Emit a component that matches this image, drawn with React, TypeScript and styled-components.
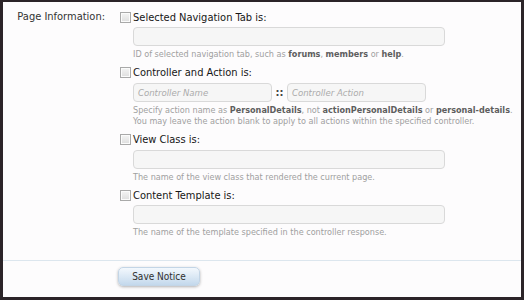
import React from 'react';
import styled, { createGlobalStyle } from 'styled-components';

const GlobalStyle = createGlobalStyle`
  html, body {
    margin: 0;
    padding: 0;
  }
  body {
    background: #2b2428;
    font-family: "DejaVu Sans Condensed", "DejaVu Sans", Tahoma, sans-serif;
  }
`;

const Panel = styled.div`
  margin: 2px 3px 3px 3px;
  height: 295px;
  background: #fdfcfd;
  display: flex;
  flex-direction: column;
`;

const FormRow = styled.dl`
  display: grid;
  grid-template-columns: 102px 1fr;
  column-gap: 15px;
  margin: 0;
  padding-top: 8px;
`;

const RowLabel = styled.dt`
  text-align: right;
  font-size: 11px;
  line-height: 14px;
  color: #333;
`;

const Options = styled.dd`
  margin: 0;
`;

const Option = styled.div`
  margin-bottom: 5px;
`;

const CheckLine = styled.label`
  display: flex;
  align-items: center;
  gap: 2px;
  height: 14px;
  font-size: 11px;
  color: #161616;
`;

const Box = styled.span`
  width: 11px;
  height: 11px;
  box-sizing: border-box;
  border: 1px solid #a9a9a9;
  background: linear-gradient(#f4f4f4, #dedede);
  box-shadow: inset 0 0 0 1px #fbfbfb;
`;

const Sub = styled.div`
  margin-left: 13px;
`;

const Inputs = styled.div`
  display: flex;
  align-items: center;
  margin-top: 3px;
`;

const TextBox = styled.div<{ $width: number }>`
  width: ${(p) => p.$width}px;
  height: 19px;
  box-sizing: border-box;
  border: 1px solid #d9d9d9;
  border-radius: 4px;
  background: #f6f6f6;
  padding-left: 4px;
  font-size: 9.5px;
  font-style: italic;
  line-height: 17px;
  color: #ababab;
`;

const Sep = styled.span`
  width: 15px;
  text-align: center;
  font-size: 11px;
  font-weight: bold;
  color: #444;
`;

const Hint = styled.p`
  margin: 3px 0 0;
  font-size: 9px;
  line-height: 11.5px;
  color: #a0a0a0;

  b {
    color: #5e5e5e;
  }
`;

const Footer = styled.div`
  margin-top: 16px;
  border-top: 1px solid #dce6ee;
  padding: 4px 0 0 115px;
`;

const Button = styled.button`
  width: 82px;
  height: 19px;
  box-sizing: border-box;
  border: 1px solid #c3d5e6;
  border-radius: 5px;
  background: linear-gradient(#f3f8fd, #d9e7f4 55%, #c3d8ec);
  box-shadow: 0 1px 3px rgba(0, 0, 0, 0.3);
  font-family: inherit;
  font-size: 10px;
  color: #2f2f2f;
  padding: 0;
`;

const Check: React.FC<{ children: React.ReactNode }> = ({ children }) => (
  <CheckLine>
    <Box />
    {children}
  </CheckLine>
);

const App: React.FC = () => (
  <>
    <GlobalStyle />
    <Panel>
      <FormRow>
        <RowLabel>Page Information:</RowLabel>
        <Options>
          <Option>
            <Check>Selected Navigation Tab is:</Check>
            <Sub>
              <Inputs>
                <TextBox $width={312} />
              </Inputs>
              <Hint>
                ID of selected navigation tab, such as <b>forums</b>, <b>members</b> or <b>help</b>.
              </Hint>
            </Sub>
          </Option>
          <Option>
            <Check>Controller and Action is:</Check>
            <Sub>
              <Inputs>
                <TextBox $width={139}>Controller Name</TextBox>
                <Sep>::</Sep>
                <TextBox $width={139}>Controller Action</TextBox>
              </Inputs>
              <Hint>
                Specify action name as <b>PersonalDetails</b>, not <b>actionPersonalDetails</b> or{' '}
                <b>personal-details</b>.<br />
                You may leave the action blank to apply to all actions within the specified controller.
              </Hint>
            </Sub>
          </Option>
          <Option>
            <Check>View Class is:</Check>
            <Sub>
              <Inputs>
                <TextBox $width={312} />
              </Inputs>
              <Hint>The name of the view class that rendered the current page.</Hint>
            </Sub>
          </Option>
          <Option>
            <Check>Content Template is:</Check>
            <Sub>
              <Inputs>
                <TextBox $width={312} />
              </Inputs>
              <Hint>The name of the template specified in the controller response.</Hint>
            </Sub>
          </Option>
        </Options>
      </FormRow>
      <Footer>
        <Button>Save Notice</Button>
      </Footer>
    </Panel>
  </>
);

export default App;
